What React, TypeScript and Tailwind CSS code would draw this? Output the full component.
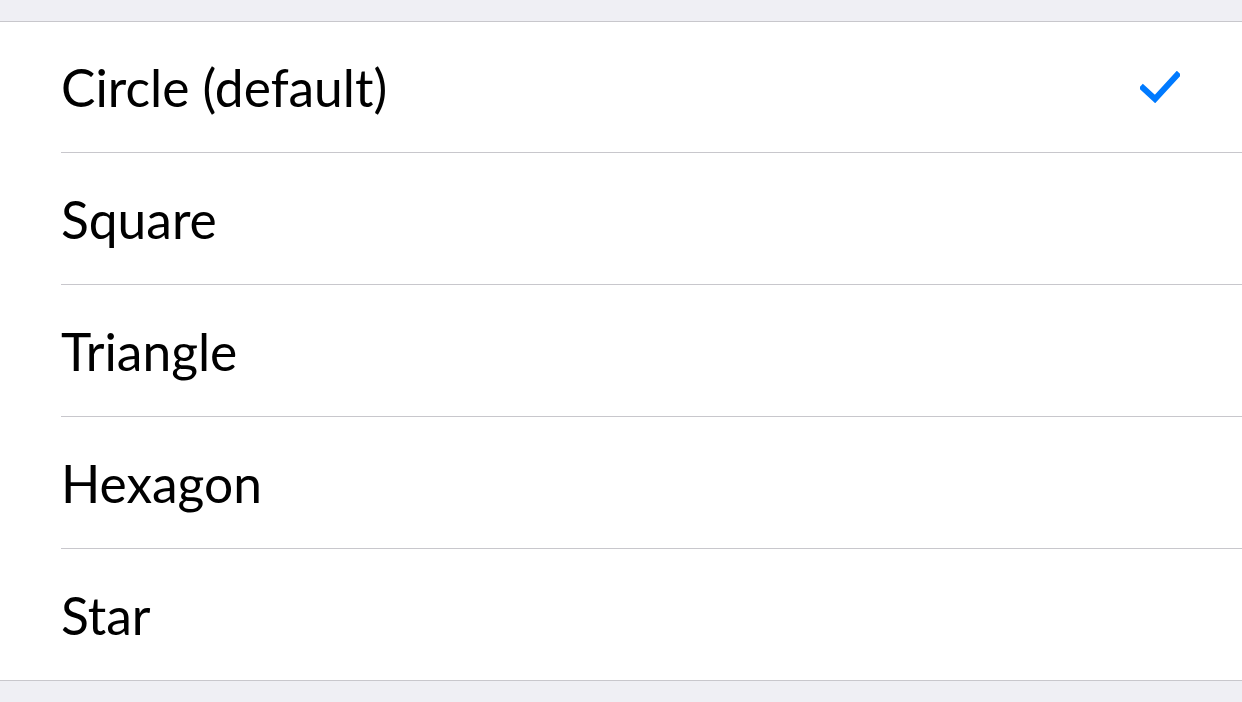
import React from "react";

const items = ["Circle (default)", "Square", "Triangle", "Hexagon", "Star"];

export default function App() {
  return (
    <div
      className="w-[1242px] h-[702px] bg-[#efeff4] pt-[21px] overflow-hidden"
      style={{ fontFamily: "Lato, 'Open Sans', sans-serif" }}
    >
      <div className="bg-white border-t border-b border-[#c8c7cc]">
        {items.map((label, i) => (
          <div key={label} className="pl-[61px]">
            <div
              className={
                "flex items-center pr-[62px] " +
                (i === 0
                  ? "h-[131px] border-b border-[#c8c7cc]"
                  : i < items.length - 1
                  ? "h-[132px] border-b border-[#c8c7cc]"
                  : "h-[131px]")
              }
            >
              <span className="flex-1 text-[51.5px] text-black leading-none pt-[2px]">
                {label}
              </span>
              {i === 0 && (
                <svg width="40" height="32" viewBox="0 0 40 32">
                  <path
                    d="M3 17 L15 28 L37 4"
                    fill="none"
                    stroke="#007aff"
                    strokeWidth="6"
                    strokeLinecap="square"
                  />
                </svg>
              )}
            </div>
          </div>
        ))}
      </div>
    </div>
  );
}
